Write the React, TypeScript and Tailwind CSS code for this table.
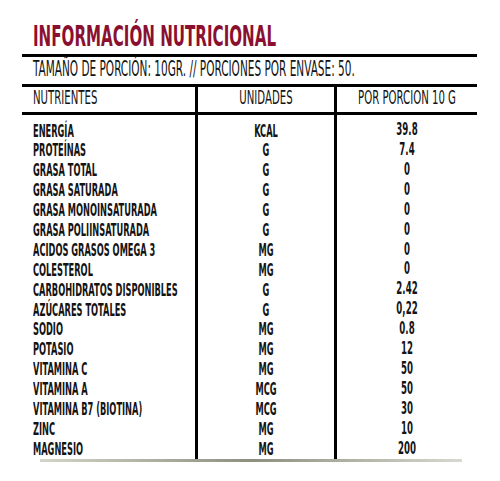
import React from "react";

const rows: [string, string, string][] = [
  ["ENERGÍA", "KCAL", "39.8"],
  ["PROTEÍNAS", "G", "7.4"],
  ["GRASA TOTAL", "G", "0"],
  ["GRASA SATURADA", "G", "0"],
  ["GRASA MONOINSATURADA", "G", "0"],
  ["GRASA POLIINSATURADA", "G", "0"],
  ["ACIDOS GRASOS OMEGA 3", "MG", "0"],
  ["COLESTEROL", "MG", "0"],
  ["CARBOHIDRATOS DISPONIBLES", "G", "2.42"],
  ["AZÚCARES TOTALES", "G", "0,22"],
  ["SODIO", "MG", "0.8"],
  ["POTASIO", "MG", "12"],
  ["VITAMINA C", "MG", "50"],
  ["VITAMINA A", "MCG", "50"],
  ["VITAMINA B7 (BIOTINA)", "MCG", "30"],
  ["ZINC", "MG", "10"],
  ["MAGNESIO", "MG", "200"],
];

function T({ children, cls = "" }: { children: React.ReactNode; cls?: string }) {
  return <span className={"inline-block whitespace-nowrap " + cls}>{children}</span>;
}

export default function App() {
  return (
    <div className="w-[500px] h-[481px] bg-white text-[#141414] font-['DejaVu_Sans_Condensed','Liberation_Sans',sans-serif] font-bold overflow-hidden">
      <div className="h-[54px] pl-[33px] pt-[22px] leading-[28px]">
        <T cls="text-[16.8px] text-[#8b1030] scale-y-[1.72] origin-center">INFORMACIÓN NUTRICIONAL</T>
      </div>
      <div className="ml-[22px] w-[455px]">
        <div className="h-[3px] bg-black" />
        <div className="h-[27px] pl-[11px] flex items-center">
          <T cls="text-[11.7px] scale-y-[1.75] font-normal">TAMAÑO DE PORCIÓN: 10GR. // PORCIONES POR ENVASE: 50.</T>
        </div>
        <div className="h-[3px] bg-black" />
        <div className="h-[25px] flex">
          <div className="w-[173px] pl-[11px] flex items-center">
            <T cls="text-[11.3px] scale-y-[1.75] font-normal">NUTRIENTES</T>
          </div>
          <div className="w-[3px] bg-black" />
          <div className="w-[136px] flex items-center justify-center">
            <T cls="text-[11.3px] scale-y-[1.75] font-normal">UNIDADES</T>
          </div>
          <div className="w-[3px] bg-black" />
          <div className="w-[140px] flex items-center justify-center">
            <T cls="text-[11.3px] scale-y-[1.75] font-normal">POR PORCION 10 G</T>
          </div>
        </div>
        <div className="h-[3px] bg-black" />
        <div className="flex h-[344px]">
          <div className="w-[173px] pl-[11px] pt-[5.5px]">
            {rows.map((r) => (
              <div key={r[0]} className="h-[19.9px] flex items-center">
                <T cls="text-[9.2px] scale-y-[1.85]">{r[0]}</T>
              </div>
            ))}
          </div>
          <div className="w-[3px] bg-black" />
          <div className="w-[136px] pt-[5.5px]">
            {rows.map((r) => (
              <div key={r[0]} className="h-[19.9px] flex items-center justify-center">
                <T cls="text-[9.2px] scale-y-[1.85]">{r[1]}</T>
              </div>
            ))}
          </div>
          <div className="w-[3px] bg-black" />
          <div className="w-[140px] pt-[5.5px]">
            {rows.map((r) => (
              <div key={r[0]} className="h-[19.9px] flex items-center justify-center">
                <T cls="text-[9.6px] scale-y-[1.85]">{r[2]}</T>
              </div>
            ))}
          </div>
        </div>
        <div className="ml-[18px] w-[422px] h-[3px] bg-gradient-to-r from-[#d4d4c8] via-[#8f8f80] to-[#d8d8d0]" />
      </div>
    </div>
  );
}
